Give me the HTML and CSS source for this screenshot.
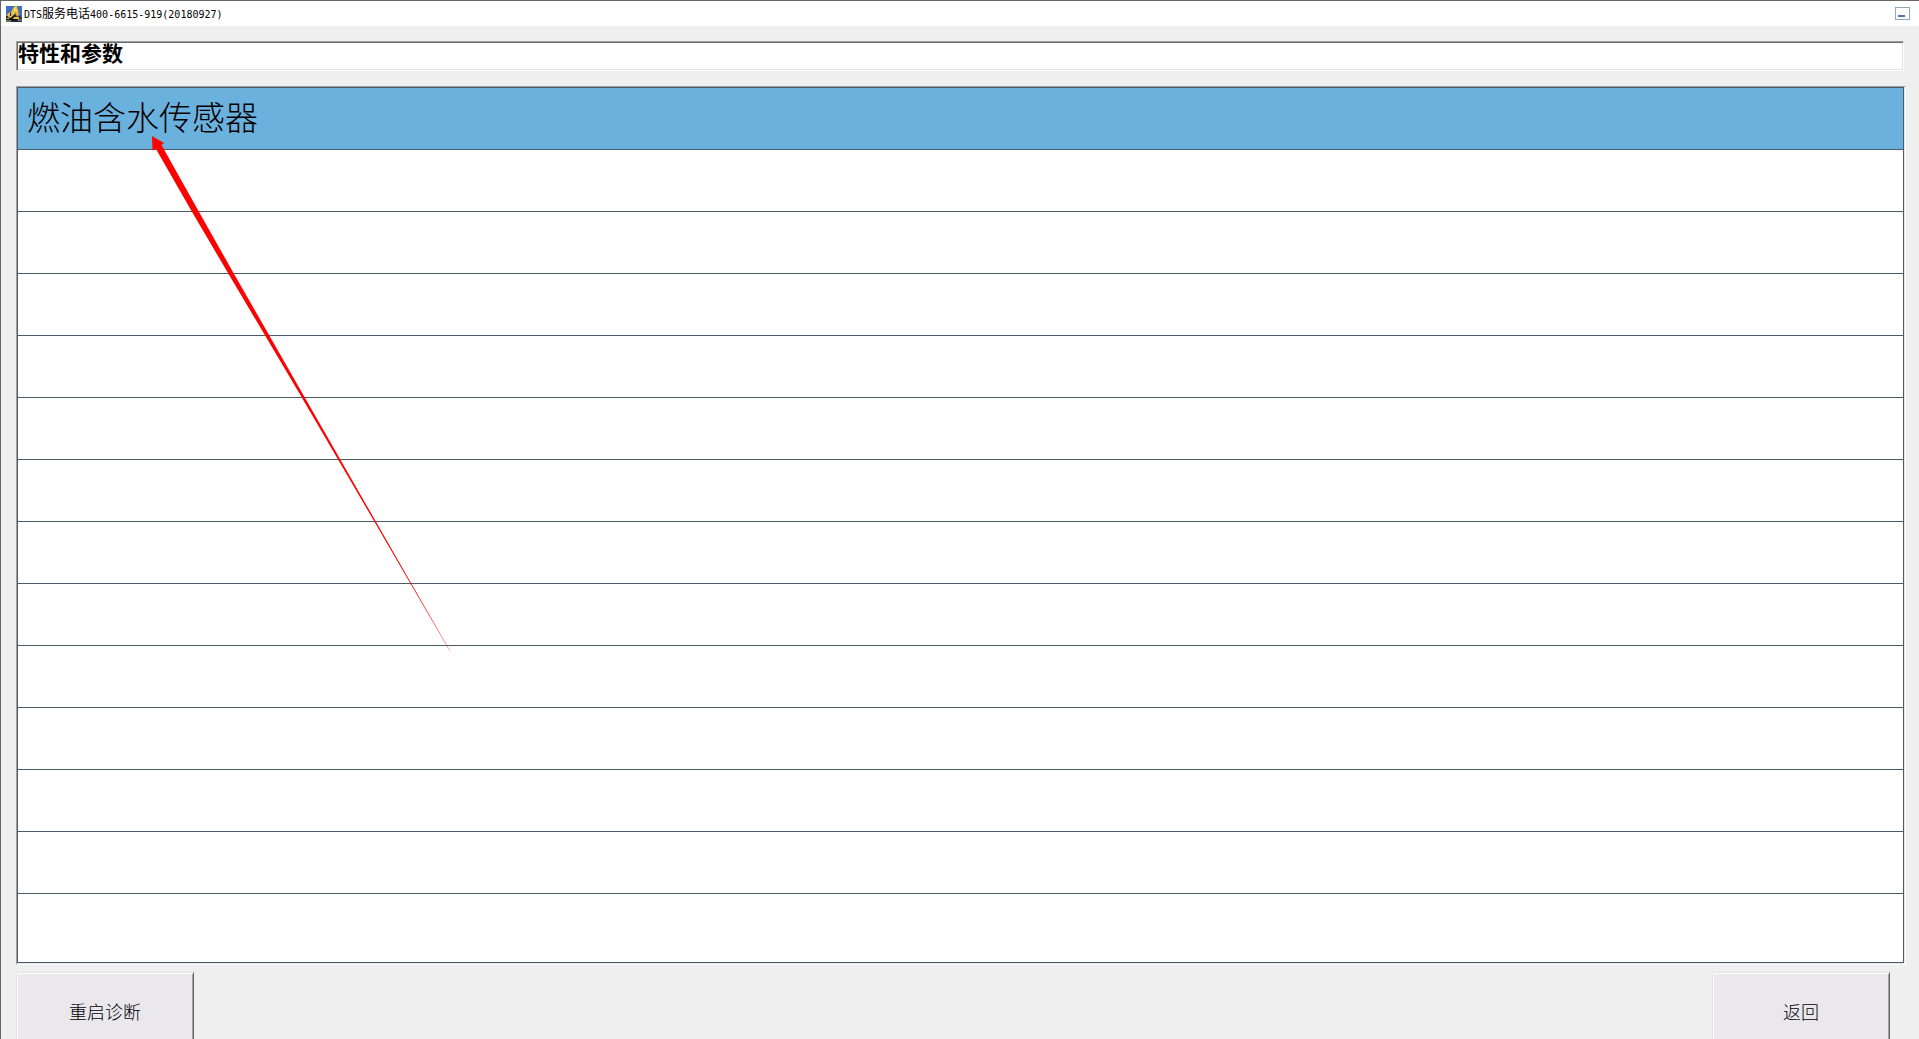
FILE: index.html
```html
<!DOCTYPE html>
<html lang="zh-CN">
<head>
<meta charset="utf-8">
<title>DTS服务电话400-6615-919(20180927)</title>
<link rel="stylesheet" href="styles.css">
</head>
<body>
<div class="window">
  <header class="titlebar">
    <svg class="app-icon" viewBox="0 0 16 16" aria-hidden="true">
      <path fill="#3f6fc4" d="M0 0h16v16H0z"/>
      <path fill="#22344a" d="M0 10h3l3-2 7 1 3 3v4H0z"/>
      <path fill="#e8b52b" d="M7 2l2-2h2l1 4 1 5-2 2-2-5-1 3-2 2-2 1-2-1 1-4 2-1z"/>
      <path fill="#ffdc65" d="M9 1h1l1 4-1 1-1-2-1 4H7l1-5z"/>
      <path fill="#15191d" d="M1 12h4l3-3 2 2 1 4H1zM4 7h1v3H3z"/>
      <path fill="#f0bd35" d="M2 7h2v3H1zM8 11h5v2H7zM1 12h2v1H1z"/>
      <path fill="#6d7650" d="M0 14h5v2H0zM12 13h4v2h-4z"/>
    </svg>
    <h1 class="caption">DTS<span class="caption-cn">服务电话</span>400-6615-919(20180927)</h1>
    <button class="minimize" type="button" aria-label="最小化"></button>
  </header>
  <main class="content">
    <input class="heading-field" type="text" value="特性和参数" aria-label="标题" readonly>
    <div class="list-frame">
      <ul class="list">
        <li class="row selected">燃油含水传感器</li>
        <li class="row"></li>
        <li class="row"></li>
        <li class="row"></li>
        <li class="row"></li>
        <li class="row"></li>
        <li class="row"></li>
        <li class="row"></li>
        <li class="row"></li>
        <li class="row"></li>
        <li class="row"></li>
        <li class="row"></li>
        <li class="row"></li>
        <li class="row"></li>
      </ul>
    </div>
    <footer class="actions">
      <button class="action" type="button">重启诊断</button>
      <button class="action" type="button">返回</button>
    </footer>
  </main>
  <svg class="pointer" width="310" height="530" viewBox="0 0 310 530" aria-hidden="true">
    <path fill="#f00" d="M0 0L12 7L9.500 9L46.500 75L81.500 137L152.500 261L298 515L149.500 261L76 137L39.500 75L4 13L.5 14.500Z"/>
    <path fill="none" stroke="#f00" stroke-opacity="0.3" d="M230 398L298 515"/>
  </svg>
</div>
</body>
</html>
```
FILE: styles.css
```css
* {
  box-sizing: border-box;
}

body {
  margin: 0;
  font-family: "Noto Sans CJK SC", sans-serif;
  color: #000;
}

.window {
  position: relative;
  height: 100vh;
  overflow: hidden;
  border-top: 1px solid #666;
  border-left: 1px solid #666;
  background: #efefef;
}

.titlebar {
  display: flex;
  align-items: center;
  gap: 2px;
  height: 25px;
  padding: 0 9px 0 5px;
  background: #fff;
}

.app-icon {
  width: 16px;
  height: 16px;
}

.caption {
  flex: 1;
  margin: 0;
  padding-top: 1px;
  font: 10px/16px "DejaVu Sans Mono", "Noto Sans CJK SC", monospace;
}

.caption-cn {
  font-family: "Noto Sans CJK SC", sans-serif;
  font-size: 12px;
}

.minimize {
  display: flex;
  align-items: flex-end;
  width: 15px;
  height: 13px;
  padding: 2px;
  border: 1px solid #8aaabf;
  border-radius: 0;
  background: #fff;
}

.minimize::before {
  content: "";
  width: 7px;
  height: 2px;
  background: #5573a8;
}

.content {
  padding: 15px 13px 0 15px;
}

.heading-field {
  display: block;
  width: calc(100% - 2px);
  height: 30px;
  padding: 0 1px 8px;
  border: 1px solid;
  border-color: #a0a0a0 #fff #fff #a0a0a0;
  box-shadow: inset 1px 1px #696969, inset -1px -1px #e3e3e3;
  background: #fff;
  color: #000;
  font: bold 21px/20px "Noto Sans CJK SC", sans-serif;
  outline: 0;
}

.list-frame {
  margin-top: 15px;
  padding: 0 1px 1px 0;
  border: 1px solid;
  border-color: #a0a0a0 #fff #fff #a0a0a0;
  background: #e3e3e3;
}

.list {
  margin: 0;
  padding: 0;
  border: 1px solid #4b5b69;
  background: #fff;
  list-style: none;
}

.row {
  height: 62px;
  padding: 0 9px;
  border-bottom: 1px solid #4b5b69;
  font-size: 33px;
  font-weight: 300;
  line-height: 56px;
}

.row:last-child {
  height: 68px;
  border-bottom: 0;
}

.selected {
  background: #6bb1de;
}

.actions {
  display: flex;
  justify-content: space-between;
  padding: 7px 16px 0 0;
}

.action {
  width: 178px;
  height: 80px;
  padding: 0 0 2px;
  border: 1px solid;
  border-color: #e3e3e3 #696969 #696969 #e3e3e3;
  box-shadow: inset 1px 1px #fff, inset -1px -1px #a0a0a0;
  background: #eae8ed;
  color: #000;
  font: 300 18px/24px "Noto Sans CJK SC", sans-serif;
}

.pointer {
  position: absolute;
  top: 135px;
  left: 151px;
  pointer-events: none;
}
```
